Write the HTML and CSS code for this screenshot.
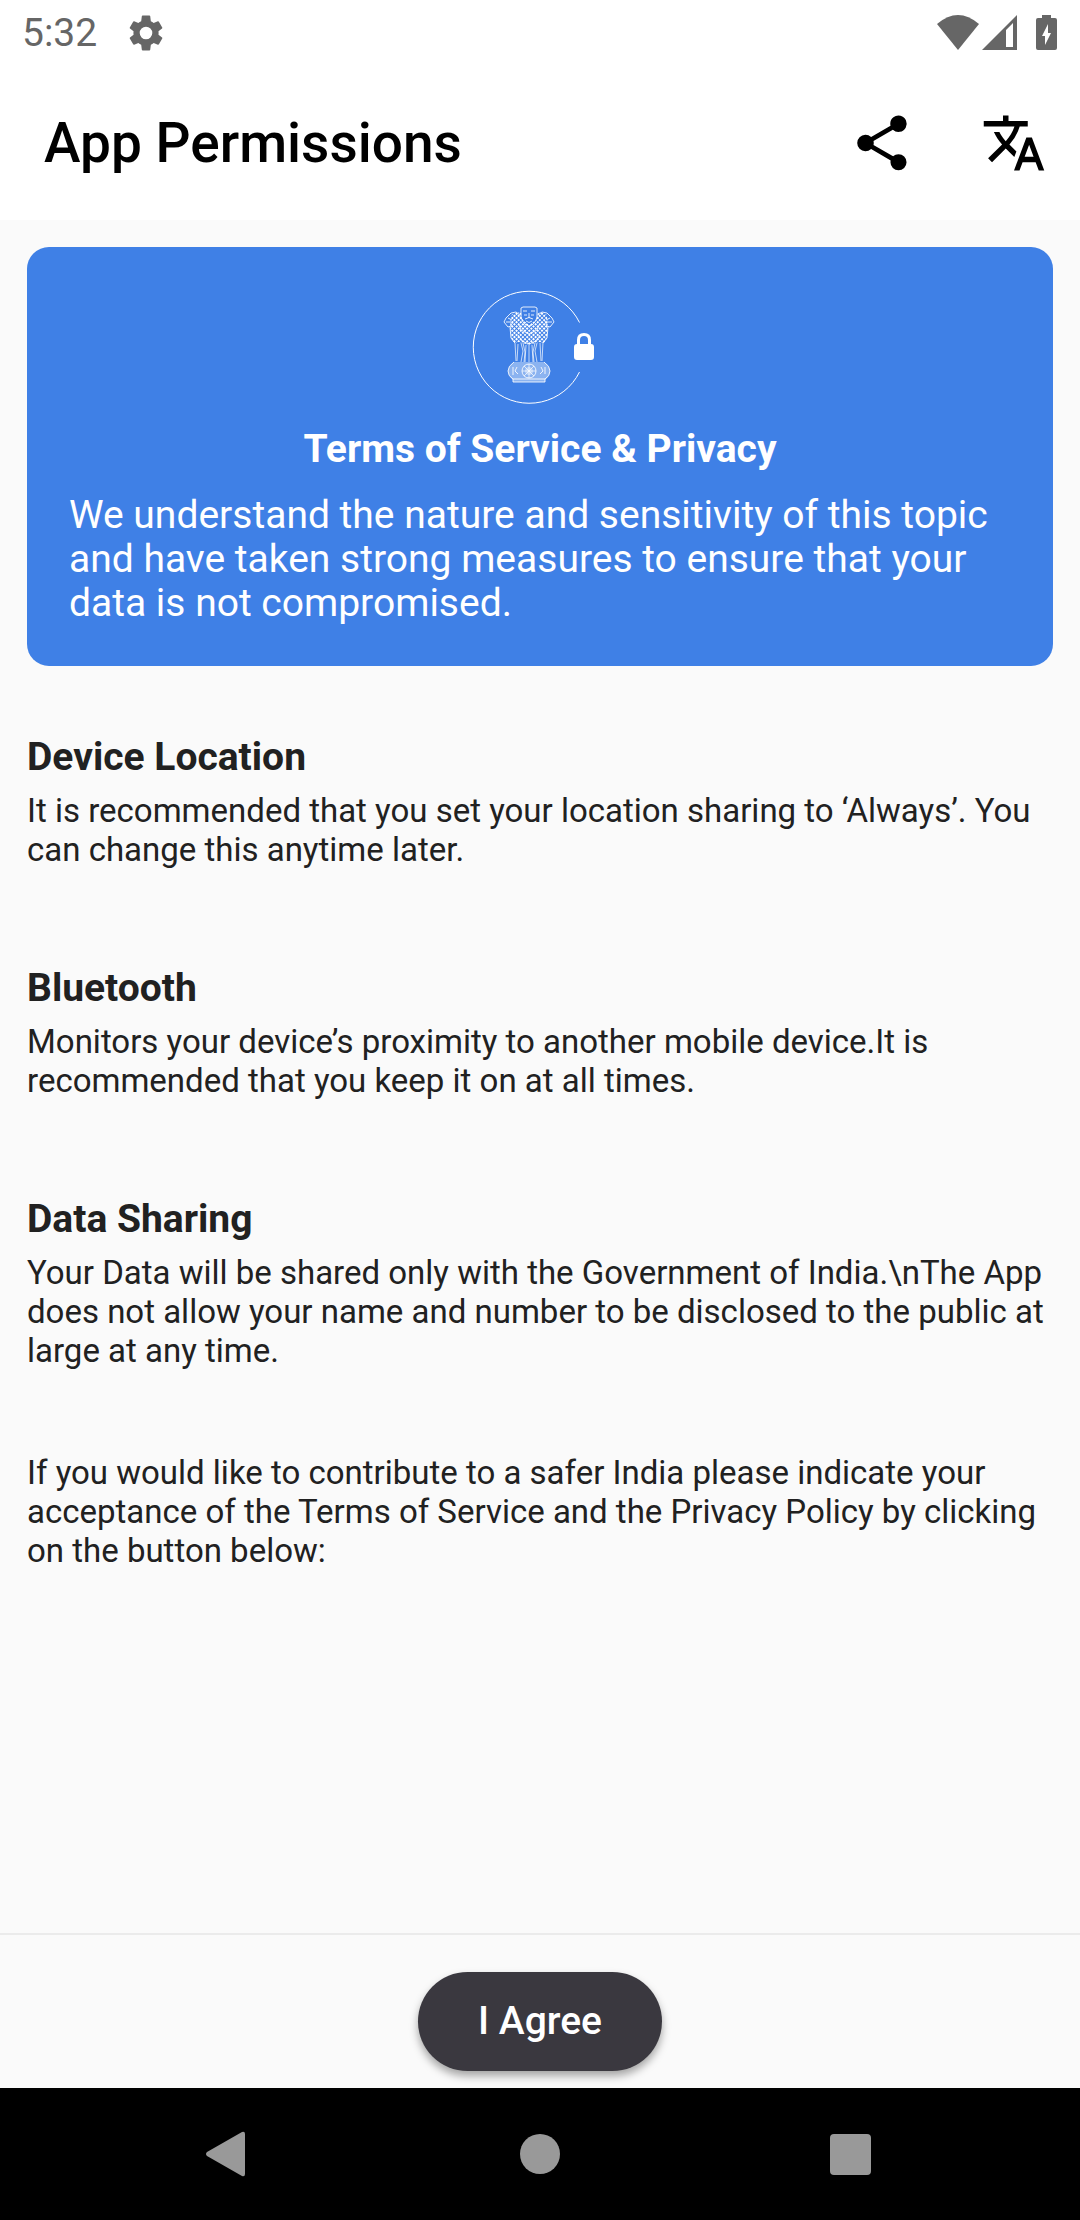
FILE: index.html
```html
<!DOCTYPE html>
<html lang="en">
<head>
<meta charset="utf-8">
<meta name="viewport" content="width=device-width, initial-scale=1">
<title>App Permissions</title>
<link rel="stylesheet" href="styles.css">
</head>
<body>
<div class="screen">
  <div class="status-bar">
    <span class="clock">5:32</span>
    <svg class="status-gear" viewBox="0 0 24 24" aria-hidden="true"><path d="M19.14 12.94c.04-.3.06-.61.06-.94s-.02-.64-.07-.94l2.03-1.58a.49.49 0 0 0 .12-.61l-1.92-3.32a.49.49 0 0 0-.59-.22l-2.39.96a7 7 0 0 0-1.62-.94L14.4 2.3A.48.48 0 0 0 13.92 2h-3.840a.47.47 0 0 0-.47.410L9.250 5.350a7.200 7.200 0 0 0-1.620.940L5.240 5.330a.48.48 0 0 0-.59.220L2.740 8.870a.47.47 0 0 0 .12.610l2.030 1.580a6 6 0 0 0 0 1.880l-2.030 1.580a.49.49 0 0 0-.12.610l1.920 3.320c.12.220.370.290.590.220l2.390-.96c.5.380 1.030.700 1.620.940l.360 2.940c.050.240.240.410.480.410h3.840c.240 0 .440-.170.470-.410l.360-2.940a7 7 0 0 0 1.620-.940l2.390.960c.220.080.470 0 .590-.220l1.920-3.320a.47.47 0 0 0-.12-.610zM12 15.600a3.600 3.600 0 1 1 0-7.200 3.600 3.600 0 0 1 0 7.200z"/></svg>
    <svg class="status-wifi" viewBox="0 0 42 36" aria-hidden="true"><path d="M0 9Q21-9 42 9L21 35z"/></svg>
    <svg class="status-signal" viewBox="0 0 36 36" aria-hidden="true"><path fill-rule="evenodd" d="M35 0v35H0zM24 15v17h7V8z"/></svg>
    <svg class="status-battery" viewBox="0 0 22 36" aria-hidden="true"><path fill-rule="evenodd" d="M6 0h9v3h4q2 0 2 2v28q0 2-2 2H2q-2 0-2-2V5q0-2 2-2h4zM12 9L6 21h3v9l6-12h-3z"/></svg>
  </div>

  <header class="app-bar">
    <h1 class="app-title">App Permissions</h1>
    <button class="icon-button" type="button" aria-label="Share">
      <svg viewBox="0 0 24 24" aria-hidden="true"><path d="M18 16.080c-.760 0-1.440.300-1.960.770L8.910 12.700c.050-.230.090-.460.090-.700s-.040-.470-.090-.700l7.050-4.110A2.990 2.990 0 1 0 15 5c0 .240.040.470.090.700L8.040 9.810A3 3 0 1 0 8.040 14.190l7.120 4.160c-.050.210-.080.430-.080.650a2.920 2.920 0 1 0 2.920-2.920z"/></svg>
    </button>
    <button class="icon-button" type="button" aria-label="Change language">
      <svg viewBox="0 0 24 24" aria-hidden="true"><path d="M12.870 15.070l-2.540-2.510.030-.030A17.520 17.520 0 0 0 14.070 6H17V4h-7V2H8v2H1v1.990h11.170C11.500 7.920 10.440 9.750 9 11.350 8.070 10.320 7.300 9.190 6.690 8h-2c.730 1.630 1.730 3.170 2.980 4.560l-5.090 5.020L4 19l5-5 3.110 3.110.760-2.040zM18.500 10h-2L12 22h2l1.120-3h4.750L21 22h2l-4.500-12zm-2.620 7l1.620-4.330L19.120 17h-3.240z"/></svg>
    </button>
  </header>

  <main class="content">
    <section class="card">
      <svg class="emblem" viewBox="0 0 136 116" role="img" aria-label="State Emblem of India with lock">
        <defs>
          <pattern id="mane" width="3" height="3" patternUnits="userSpaceOnUse" patternTransform="rotate(45)">
            <rect width="2" height="2" fill="#fff"/>
          </pattern>
        </defs>
        <path class="ring" d="M107.500 33.500A56 56 0 1 0 107.500 83"/>
        <g class="lions">
          <path class="fur" d="M49 24l-4-1-6 3-1 12 1 11 3 5 5-1 4 1 6 2 6-2 4-1 5 1 3-5 1-11-1-12-5-3-4 1-2 7-7 5-6-5z"/>
          <path class="outline" d="M49 19l2-1h12l2 1v9q-2 8-8 9-6-1-8-9zM51 22h4M59 22h4M52 26h3M59 26h3M57 24v5M53 30q4-3 8 0M54 32q3 3 6 0"/>
          <path class="outline" d="M48 26l-4-3-5 1-5 5-2 4 4 5 3-1 2-5M66 26l4-3 5 1 5 5 2 4-4 5-3-1-2-5M36 29l4 2M34 33h5M78 29l-4 2M80 33h-5"/>
          <path class="outline" d="M38 38l1 11 4 5M76 38l-1 11-4 5M47 36l2 5 8 4 8-4 2-5M46 46l4 6 7 3 7-3 4-6"/>
          <path class="legs" d="M43 54l1 18M46 55l-1 17M49 54l2 8-2 11M51 54l2 9-1 10M54 56l-1 17M57 56v17M60 56l1 17M63 54l-2 9 1 10M65 54l-2 8 2 11M68 54l1 18M71 53l-1 19"/>
          <path class="base-fill" d="M42 73q-6 4-6 9t5 9v2h32v-2q5-4 5-9t-6-9z"/>
          <path class="outline" d="M42 73q-6 4-6 9t5 8h32q5-3 5-8t-6-9M41 90v3h32v-3M41 78v8M45 78l-2 4 3 3M69 78l2 4-3 3M73 78v7"/>
          <circle class="outline" cx="57" cy="82" r="7"/>
          <circle class="wheel" cx="57" cy="82" r="4"/>
          <path class="legs" d="M57 75v14M50 82h14M52 77l10 10M62 77L52 87"/>
        </g>
        <path fill-rule="evenodd" d="M105 55v-4q0-7 7-7t7 7v4q3 0 3 3v10q0 3-3 3h-14q-3 0-3-3V58q0-3 3-3zm3 0h8v-4q0-4-4-4t-4 4z"/>
      </svg>
      <h2 class="card-title">Terms of Service &amp; Privacy</h2>
      <p class="card-text">We understand the nature and sensitivity of this topic and have taken strong measures to ensure that your data is not compromised.</p>
    </section>

    <div class="permissions">
      <section>
        <h2 class="permission-title">Device Location</h2>
        <p class="body-text">It is recommended that you set your location sharing to ‘Always’. You can change this anytime later.</p>
      </section>
      <section>
        <h2 class="permission-title">Bluetooth</h2>
        <p class="body-text">Monitors your device’s proximity to another mobile device.It is recommended that you keep it on at all times.</p>
      </section>
      <section>
        <h2 class="permission-title">Data Sharing</h2>
        <p class="body-text">Your Data will be shared only with the Government of India.\nThe App does not allow your name and number to be disclosed to the public at large at any time.</p>
      </section>
    </div>
    <p class="body-text">If you would like to contribute to a safer India please indicate your acceptance of the Terms of Service and the Privacy Policy by clicking on the button below:</p>
  </main>

  <footer class="action-bar">
    <button class="agree-button" type="button">I Agree</button>
  </footer>

  <nav class="system-nav" aria-label="System navigation">
    <button class="nav-button" type="button" aria-label="Back">
      <svg viewBox="0 0 66 66" aria-hidden="true"><path d="M10 31L45 11q3-1 3 2v40q0 3-3 2L10 35q-2-2 0-4z"/></svg>
    </button>
    <button class="nav-button" type="button" aria-label="Home">
      <svg viewBox="0 0 66 66" aria-hidden="true"><circle cx="33" cy="33" r="20"/></svg>
    </button>
    <button class="nav-button" type="button" aria-label="Recent apps">
      <svg viewBox="0 0 66 66" aria-hidden="true"><rect x="13" y="13" width="41" height="41" rx="4"/></svg>
    </button>
  </nav>
</div>
</body>
</html>
```
FILE: styles.css
```css
* {
  box-sizing: border-box;
}

body {
  margin: 0;
  background: #fafafa;
  color: #212121;
  font-family: Roboto, "Liberation Sans", sans-serif;
}

h1,
h2,
p {
  margin: 0;
}

button {
  padding: 0;
  border: 0;
  background: none;
  font: inherit;
  color: inherit;
  cursor: pointer;
}

svg {
  display: block;
  fill: currentColor;
}

.screen {
  display: flex;
  flex-direction: column;
  min-height: 100vh;
}

.status-bar {
  display: flex;
  align-items: center;
  height: 66px;
  padding: 0 22px;
  background: #fff;
  color: #666;
}

.clock {
  font-size: 39px;
  line-height: 44px;
}

.status-gear {
  width: 42px;
  height: 42px;
  margin-left: 28px;
}

.status-wifi {
  width: 42px;
  height: 36px;
  margin-left: auto;
}

.status-signal {
  width: 36px;
  height: 36px;
  margin-left: 3px;
}

.status-battery {
  width: 22px;
  height: 36px;
  margin-left: 18px;
}

.app-bar {
  display: flex;
  align-items: center;
  gap: 66px;
  height: 154px;
  padding: 0 33px 0 44px;
  background: #fff;
  color: #000;
}

.app-title {
  flex: 1;
  font-size: 55px;
  font-weight: 500;
  line-height: 64px;
}

.icon-button svg,
.nav-button svg {
  width: 66px;
  height: 66px;
}

.content {
  flex: 1;
  padding: 27px;
}

.card {
  display: flex;
  flex-direction: column;
  align-items: center;
  margin-bottom: 69px;
  padding: 42px 42px 41px;
  border-radius: 22px;
  background: #3f80e6;
  color: #fff;
}

.emblem {
  width: 136px;
  height: 116px;
}

.ring,
.outline,
.legs {
  fill: none;
  stroke: #fff;
}

.outline {
  stroke-opacity: 0.85;
}

.legs {
  stroke-opacity: 0.7;
}

.fur {
  fill: url(#mane);
}

.base-fill,
.wheel {
  fill-opacity: 0.4;
}

.card-title {
  margin: 22px 0;
  font-size: 39px;
  font-weight: 700;
  line-height: 44px;
}

.card-text {
  align-self: stretch;
  font-size: 39px;
  line-height: 44px;
}

.permissions {
  display: flex;
  flex-direction: column;
  gap: 97px;
  margin-bottom: 83px;
}

.permission-title {
  margin-bottom: 12px;
  font-size: 39px;
  font-weight: 700;
  line-height: 44px;
}

.body-text {
  font-size: 33px;
  line-height: 39px;
}

.action-bar {
  display: flex;
  justify-content: center;
  padding: 37px 27px 17px;
  border-top: 2px solid #ebebeb;
}

.agree-button {
  padding: 27px 60px;
  border-radius: 50px;
  background: #3a383f;
  box-shadow: 0 5px 8px rgba(0, 0, 0, 0.35);
  color: #fff;
  font-size: 39px;
  font-weight: 500;
  line-height: 45px;
}

.system-nav {
  display: grid;
  grid-template-columns: repeat(3, 1fr);
  place-items: center;
  height: 132px;
  padding: 0 7%;
  background: #000;
  color: #999;
}
```
